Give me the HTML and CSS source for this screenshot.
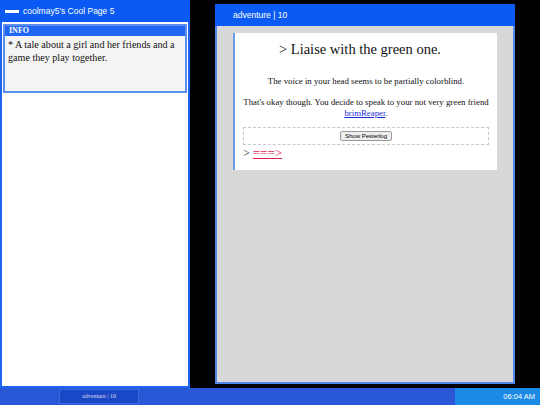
FILE: index.html
```html
<!DOCTYPE html>
<html>
<head>
<meta charset="utf-8"/>
<link rel="stylesheet" href="styles.css">
<title>coolmay5's Cool Page 5</title>
</head>
<body>

<div class="desk">

<!-- profile window -->
<div class="win winprof">
<div class="wtitle"><span class="wdash"></span>coolmay5's Cool Page 5</div>
<div class="wbody">
<div class="info">
<div class="infohd">INFO</div>
<div class="infotx">* A tale about a girl and her friends and a game they play together.</div>
</div>
</div>
</div>

<!-- adventure window -->
<div class="win winadv">
<div class="wtitle">adventure | 10</div>
<div class="wbody advbody">
<div class="page">
<h2 class="cmd">&gt; Liaise with the green one.</h2>
<p class="tx">The voice in your head seems to be partially colorblind.</p>
<p class="tx">That's okay though. You decide to speak to your not very green friend <a href="#">brimReaper</a>.</p>
<div class="plog"><button class="plbtn">Show Pesterlog</button></div>
<div class="next">&gt; <a href="#">===&gt;</a></div>
</div>
</div>
</div>

</div>

<!-- taskbar -->
<div class="bar">
<div class="task">adventure | 10</div>
<div class="clock">06:04 AM</div>
</div>

</body>
</html>
```

FILE: styles.css
```css
html,body{margin:0;padding:0;}
body{background:#000;width:540px;height:405px;overflow:hidden;position:relative;font-family:"Liberation Serif",serif;}

.desk{height:388px;position:relative;}

/** windows **/
.win{position:absolute;display:flex;flex-direction:column;}
.wtitle{height:22px;background:#0a5af3;color:#fff;font:8.5px/22px "Liberation Sans",Arial,sans-serif;display:flex;align-items:center;}
.wbody{flex:1;border:2px solid #2a6ef5;border-top:0;}

.winprof{left:0;top:0;width:190px;height:388px;}
.winprof .wtitle{padding-left:5px;}
.winprof .wbody{background:#fff;border-color:#1d64f2;}
.wdash{display:inline-block;width:14px;height:3px;background:#fff;margin-right:4px;}

.info{margin:2px 1px 0;border:2px solid #5a8ef0;background:#f4f4f4;height:65px;}
.infohd{background:#1f66f2;color:#fff;font-size:8px;font-weight:bold;line-height:10px;padding:0 4px;}
.infotx{font-size:10.1px;line-height:12.5px;padding:3px 3px;color:#111;}

.winadv{left:215px;top:4px;width:300px;height:380px;}
.winadv .wtitle{padding-left:18px;}
.advbody{background:#d8d8d8;border-color:#5487ee;border-width:0 2px 2px;padding:7px 16px 0;}

/** story page **/
.page{background:#fff;border-left:2px solid #6a9be8;padding:7px 8px 10px;color:#111;}
.cmd{font-size:14.5px;font-weight:normal;text-align:center;margin:0 0 18px;padding-right:12px;line-height:18px;}
.tx{font-size:8.8px;line-height:11px;text-align:center;margin:0 0 10px;}
.tx a{color:#1b2fd0;}
.plog{border:1px dashed #c8c8c8;text-align:center;height:16px;display:flex;align-items:center;justify-content:center;margin-top:-2px;}
.plbtn{font:6px "Liberation Sans",Arial,sans-serif;padding:1px 4px;border:1px solid #999;border-radius:2px;background:#eee;height:10px;line-height:6px;}
.next{font-size:12px;line-height:14px;margin-top:1px;}
.next a{color:#e0204a;font-size:13px;}

/** taskbar **/
.bar{position:absolute;left:0;right:0;bottom:0;height:17px;background:#2a57d6;display:flex;align-items:center;}
.task{margin-left:59px;width:78px;height:13px;background:#1a47c5;border:1px solid #3a67e0;color:#dde;font-size:6px;line-height:13px;text-align:center;}
.clock{margin-left:auto;width:85px;height:17px;background:#1a8ae6;color:#fff;font:7.5px/17px "Liberation Sans",Arial,sans-serif;text-align:right;padding-right:5px;box-sizing:border-box;}
```
